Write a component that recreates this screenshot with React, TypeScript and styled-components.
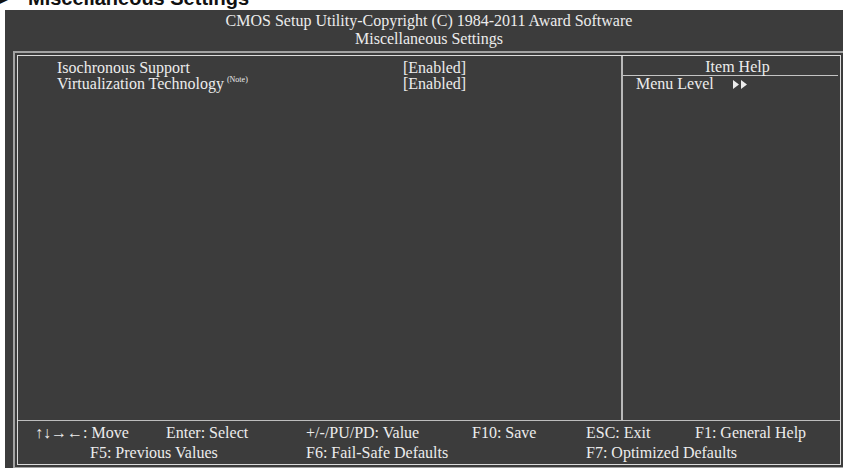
import React from 'react'
import styled, { createGlobalStyle } from 'styled-components'

//--------------------------------------
// style
//--------------------------------------
const GlobalStyle = createGlobalStyle`
  html, body {
    margin: 0;
    padding: 0;
    background: #ffffff;
    overflow: hidden;
  }
`

const Page = styled.div`
  width: 843px;
  height: 468px;
  overflow: hidden;
  background: #ffffff;
`

const SectionTitle = styled.div`
  height: 10px;
  overflow: hidden;
  display: flex;
  align-items: flex-end;
  font-family: 'Liberation Sans', Arial, sans-serif;
  font-weight: bold;
  font-size: 20px;
  line-height: 16px;
  color: #111111;
  white-space: nowrap;

  span {
    margin-bottom: 4px;
  }

  .mark {
    width: 34px;
    margin-left: -6px;
  }
`

const Console = styled.div`
  margin-left: 5px;
  width: 850px;
  height: 470px;
  background: #3c3c3c;
  color: #ececec;
  font-family: 'Liberation Serif', 'Times New Roman', serif;
  font-size: 16px;
`

const Header = styled.div`
  width: 848px;
  padding-top: 2px;
  text-align: center;
  line-height: 18px;
  white-space: nowrap;
`

const Frame = styled.div`
  margin: 3px 0 0 8px;
  width: 832px;
  box-sizing: border-box;
  border: 2px solid #a3a3a3;
  padding: 2px;
`

const Screen = styled.div`
  box-sizing: border-box;
  width: 824px;
  height: 410px;
  border: 1px solid #dcdcdc;
  display: grid;
  grid-template-rows: 364px auto;
`

const Main = styled.div`
  display: grid;
  grid-template-columns: 603px 1fr;
`

const ItemList = styled.div`
  padding: 4px 0 0 39px;
`

const ItemRow = styled.div`
  display: grid;
  grid-template-columns: 346px auto;
  line-height: 16px;
  white-space: nowrap;
`

const Note = styled.sup`
  font-size: 8px;
  line-height: 0;
  margin-left: 3px;
  vertical-align: 7px;
`

const HelpPanel = styled.div`
  border-left: 2px solid #b9b9b9;
`

const HelpTitle = styled.div`
  padding: 3px 0 0 14px;
  line-height: 16px;
  text-align: center;
  border-bottom: 1px solid #c4c4c4;
  margin-right: 2px;
`

const HelpLine = styled.div`
  display: flex;
  align-items: center;
  padding-left: 13px;
  line-height: 16px;

  span {
    width: 97px;
  }
`

const Footer = styled.div`
  border-top: 1px solid #bdbdbd;
  padding-top: 2px;
`

const FooterRow = styled.div<{ $cols: string; $indent: number }>`
  display: grid;
  grid-template-columns: ${(p) => p.$cols};
  padding-left: ${(p) => p.$indent}px;
  line-height: 20px;
  white-space: nowrap;
`

//--------------------------------------
// datas
//--------------------------------------
const items = [
  { label: 'Isochronous Support', value: '[Enabled]', note: false },
  { label: 'Virtualization Technology', value: '[Enabled]', note: true },
]

const keysTop = ['↑↓→←: Move', 'Enter: Select', '+/-/PU/PD: Value', 'F10: Save', 'ESC: Exit', 'F1: General Help']
const keysBottom = ['F5: Previous Values', 'F6: Fail-Safe Defaults', 'F7: Optimized Defaults']

//----------------------------------
// component
//----------------------------------
const DoubleArrow = () => (
  <svg width="14" height="9" viewBox="0 0 14 9">
    <polygon points="0,0 6,4.5 0,9" fill="#ececec" />
    <polygon points="8,0 14,4.5 8,9" fill="#ececec" />
  </svg>
)

const App = () => {
  return (
    <Page>
      <GlobalStyle />
      <SectionTitle>
        <span className="mark">➤</span>
        <span>Miscellaneous Settings</span>
      </SectionTitle>
      <Console>
        <Header>
          CMOS Setup Utility-Copyright (C) 1984-2011 Award Software
          <br />
          Miscellaneous Settings
        </Header>
        <Frame>
          <Screen>
            <Main>
              {/** @section items */}
              <ItemList>
                {items.map((item) => (
                  <ItemRow key={item.label}>
                    <span>
                      {item.label}
                      {item.note && <Note>(Note)</Note>}
                    </span>
                    <span>{item.value}</span>
                  </ItemRow>
                ))}
              </ItemList>

              {/** @section help */}
              <HelpPanel>
                <HelpTitle>Item Help</HelpTitle>
                <HelpLine>
                  <span>Menu Level</span>
                  <DoubleArrow />
                </HelpLine>
              </HelpPanel>
            </Main>

            {/** @section keys */}
            <Footer>
              <FooterRow $cols="131px 140px 166px 114px 109px auto" $indent={17}>
                {keysTop.map((k) => (
                  <span key={k}>{k}</span>
                ))}
              </FooterRow>
              <FooterRow $cols="216px 280px auto" $indent={72}>
                {keysBottom.map((k) => (
                  <span key={k}>{k}</span>
                ))}
              </FooterRow>
            </Footer>
          </Screen>
        </Frame>
      </Console>
    </Page>
  )
}

export default App
